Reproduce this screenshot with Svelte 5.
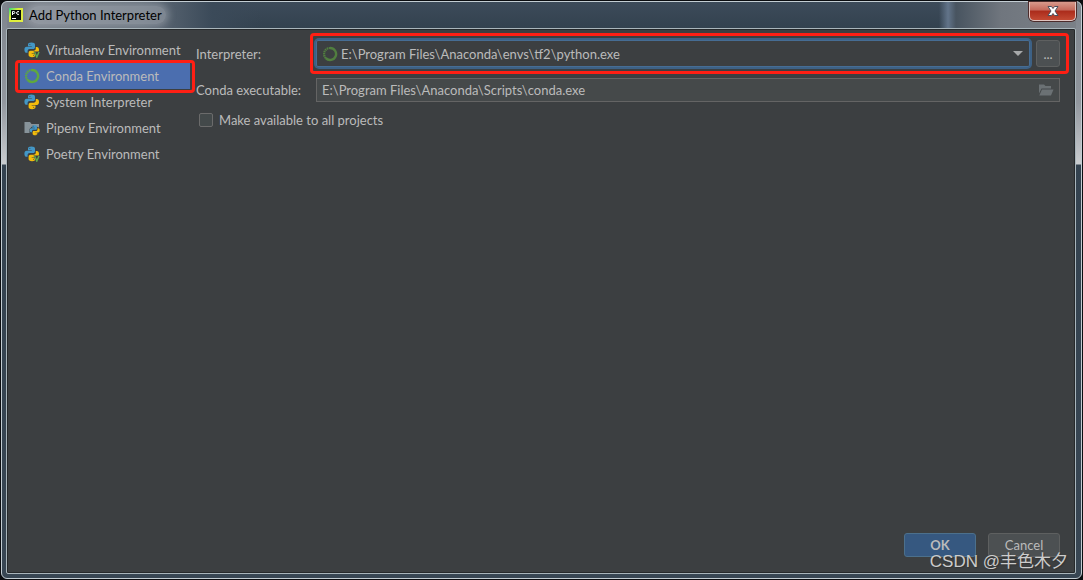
<script>
    const environments = [
        { id: 'virtualenv', name: 'Virtualenv Environment', icon: 'python', badge: true },
        { id: 'conda', name: 'Conda Environment', icon: 'conda' },
        { id: 'system', name: 'System Interpreter', icon: 'python' },
        { id: 'pipenv', name: 'Pipenv Environment', icon: 'pipenv' },
        { id: 'poetry', name: 'Poetry Environment', icon: 'python', badge: true },
    ];

    const interpreters = ['E:\\Program Files\\Anaconda\\envs\\tf2\\python.exe'];

    let selected = $state('conda');
    let interpreter = $state(interpreters[0]);
    let executable = $state('E:\\Program Files\\Anaconda\\Scripts\\conda.exe');
    let shared = $state(false);
</script>

{#snippet snakes()}
    <path fill="#4397c6" d="M7.4 .5C4.900 .5 4 1.400 4 2.700v1.500h3.800v.6H2.600C1.200 4.800 .4 6 .4 7.700c0 1.900.8 3.100 2.200 3.100h1V9.300c0-1.300.9-2.200 2.200-2.200h3.300c1.100 0 1.900-.8 1.900-1.900V2.700C11 1.300 9.800 .5 7.400 .5z" />
    <path fill="#f4bd0b" d="M8 15.200c2.600 0 3.500-.9 3.500-2.200v-1.500H7.700v-.6h5.100c1.500 0 2.200-1.200 2.200-2.900 0-1.900-.8-3.100-2.200-3.100h-1v1.700c0 1.300-.9 2.200-2.200 2.200H6.500c-1.100 0-1.900.8-1.900 1.900V13c0 1.400 1.200 2.200 3.400 2.200z" />
    <circle cx="5.900" cy="2.400" r=".5" fill="#3c3f41" />
    <circle cx="9.700" cy="13.300" r=".5" fill="#3c3f41" />
{/snippet}

{#snippet condaRing()}
    <svg class="icon" viewBox="0 0 16 16" fill="none" stroke="#5fa83f" aria-hidden="true">
        <path stroke-width="2.400" d="M8 2A6 6 0 1 1 3.800 12.200" />
        <path stroke-width="2.200" stroke-dasharray="1.500 .6" d="M3.800 12.200A6 6 0 0 1 8 2" />
    </svg>
{/snippet}

<main class="window">
    <header>
        <svg class="logo" viewBox="0 0 14 14" aria-hidden="true">
            <defs>
                <linearGradient id="logo-edge" x2="1" y2="1">
                    <stop offset="0" stop-color="#21d789" />
                    <stop offset=".35" stop-color="#d9ed35" />
                    <stop offset="1" stop-color="#e5f044" />
                </linearGradient>
            </defs>
            <path fill="url(#logo-edge)" d="M0 0h14v14H0z" />
            <path fill="#050805" d="M2 2h10v10H2z" />
            <path fill="none" stroke="#fff" d="M3.500 7V3.500h1.300a1 1 0 0 1 0 2H3.500M10 3.800A1.500 1.500 0 1 0 10 6.200M3 10.500h4" />
        </svg>
        <h1>Add Python Interpreter</h1>
        <button class="close" aria-label="Close">
            <svg viewBox="0 0 12 10" aria-hidden="true">
                <path fill="#fff" stroke="#4a4f5c" d="M1 .5h3.500L6 2.500 7.500 .5H11L8 5l3 4.500H7.500L6 7.500 4.500 9.500H1L4 5z" />
            </svg>
        </button>
    </header>

    <div class="client">
        <div class="body">
            <nav>
                {#each environments as env}
                    <button
                        class="env"
                        class:selected={selected === env.id}
                        onclick={() => (selected = env.id)}
                    >
                        {#if env.icon === 'conda'}
                            {@render condaRing()}
                        {:else if env.icon === 'pipenv'}
                            <svg class="icon" viewBox="0 0 16 16" aria-hidden="true">
                                <path fill="#87939a" d="M.5 2h5.500l1.500 2H15v3.500L9 5.500 5.500 9v4h-5z" />
                                <g transform="translate(5.500 5) scale(.68)">{@render snakes()}</g>
                            </svg>
                        {:else}
                            <svg class="icon" viewBox="0 0 16 16" aria-hidden="true">
                                {@render snakes()}
                                {#if env.badge}
                                    <path fill="#3c3f41" d="M9.500 9.500H16V16h-4z" />
                                    <path fill="none" stroke="#62a84a" stroke-width="1.500" d="M10.600 10l2.200 5 2.200-5" />
                                {/if}
                            </svg>
                        {/if}
                        {env.name}
                    </button>
                {/each}
            </nav>

            <form>
                <div class="row interpreter">
                    <label for="interpreter">Interpreter:</label>
                    <div class="marked">
                        <div class="combo">
                            {@render condaRing()}
                            <select id="interpreter" bind:value={interpreter}>
                                {#each interpreters as path}
                                    <option value={path}>{path}</option>
                                {/each}
                            </select>
                            <svg class="arrow" viewBox="0 0 10 5" aria-hidden="true">
                                <path fill="#a7a9aa" d="M0 0h10L5 5z" />
                            </svg>
                        </div>
                        <button type="button" class="more" aria-label="Browse interpreters">...</button>
                    </div>
                </div>
                <div class="row">
                    <label for="executable">Conda executable:</label>
                    <div class="path">
                        <input id="executable" type="text" bind:value={executable} />
                        <svg class="folder" viewBox="0 0 16 12" aria-hidden="true">
                            <path fill="#6b7174" d="M1 .5h5L7.500 2H13v2.500H3.500L1 9.500z" />
                            <path fill="#6b7174" d="M4 5.500h11.500L13 11.500H1.300z" />
                        </svg>
                    </div>
                </div>
                <label class="check">
                    <input type="checkbox" bind:checked={shared} />
                    Make available to all projects
                </label>
            </form>
        </div>

        <footer>
            <button class="action primary">OK</button>
            <button class="action">Cancel</button>
        </footer>
    </div>
    <span class="watermark">CSDN @丰色木夕</span>
</main>

<style>
    :global(body) {
        background: #0b0d10;
    }
    * {
        box-sizing: border-box;
    }
    .window {
        position: relative;
        display: flex;
        flex-direction: column;
        min-height: calc(100vh - 2px);
        margin: 1px;
        padding: 0 5px 4px 4px;
        border: 1px solid #c3cdd3;
        border-radius: 6px;
        background:
            linear-gradient(#7e858d, #92979e 100px, #c9cccf 162px, transparent 163px) left / 5px 100% no-repeat,
            linear-gradient(#7e858d, #92979e 100px, #c9cccf 162px, transparent 163px) right / 5px 100% no-repeat,
            linear-gradient(90deg, #7d838c, #626d79 140px, #3b4a59 210px, transparent 260px) top / 100% 28px no-repeat,
            linear-gradient(270deg, #7b8188, #70767e 80px, #485460 125px, #62748a 133px, transparent 142px) top / 100% 28px no-repeat,
            linear-gradient(#3d4b5a, #32414e 28px, #384653);
        color: #bbb;
        font: 13px/18px Lato, "Open Sans", sans-serif;
    }
    button,
    input,
    select {
        font: inherit;
        color: inherit;
    }

    header {
        display: flex;
        align-items: center;
        gap: 6px;
        height: 26px;
        padding-left: 3px;
    }
    .logo {
        width: 14px;
        height: 14px;
    }
    h1 {
        margin: 0;
        padding-right: 4px;
        border-radius: 10px;
        background: rgba(185, 190, 197, 0.4);
        box-shadow: 0 0 7px 3px rgba(185, 190, 197, 0.4);
        color: #000;
        font: inherit;
    }
    .close {
        display: grid;
        place-items: center;
        align-self: flex-start;
        width: 47px;
        height: 19px;
        margin-left: auto;
        padding: 0;
        border: 1px solid #e0c4c0;
        border-top: 0;
        border-radius: 0 0 5px 5px;
        background: linear-gradient(#d89a8c, #c4685a 45%, #ab2b1b 50%, #c34a33);
        box-shadow: 0 0 0 1px #4c2b2b;
    }
    .close svg {
        width: 12px;
        height: 10px;
    }

    .client {
        display: flex;
        flex: 1;
        flex-direction: column;
        justify-content: space-between;
        padding: 8px 15px 16px 13px;
        border: 1px solid #a9b5bb;
        border-radius: 2px;
        background: #3c3f41;
        box-shadow: inset 0 0 0 1px #26292b;
    }
    .body {
        display: flex;
        gap: 6px;
    }
    nav {
        flex: none;
        width: 170px;
    }
    .env {
        position: relative;
        display: flex;
        align-items: center;
        gap: 6px;
        width: 100%;
        height: 26px;
        padding: 0 4px;
        border: 0;
        background: none;
        white-space: nowrap;
    }
    .env.selected {
        background: #4b6eaf;
    }
    .env.selected::after {
        content: "";
        position: absolute;
        inset: -3px -5px -4px;
        border: 3px solid #ff1f14;
        border-radius: 4px;
    }
    .icon {
        flex: none;
        width: 16px;
        height: 16px;
    }

    form {
        flex: 1;
        min-width: 0;
    }
    .row {
        display: flex;
        align-items: center;
        margin-bottom: 8px;
    }
    .row label {
        flex: none;
        width: 120px;
    }
    .marked {
        position: relative;
        display: flex;
        flex: 1;
        gap: 6px;
        padding: 3px 0;
    }
    .marked::after {
        content: "";
        position: absolute;
        inset: -4px -9px -4px -6px;
        border: 3px solid #ff1f14;
        border-radius: 4px;
        pointer-events: none;
    }
    .combo {
        position: relative;
        display: flex;
        flex: 1;
        align-items: center;
        height: 27px;
        border-radius: 3px;
        box-shadow: 0 0 0 2px #3d6185;
    }
    .combo .icon {
        position: absolute;
        left: 6px;
        opacity: 0.6;
    }
    .combo select {
        width: 100%;
        height: 100%;
        padding: 0 24px;
        border: 1px solid #466d94;
        border-radius: 2px;
        outline: 0;
        background: none;
        appearance: none;
    }
    .arrow {
        position: absolute;
        right: 7px;
        width: 10px;
        height: 5px;
        pointer-events: none;
    }
    .more {
        width: 24px;
        padding: 0;
        border: 1px solid #5e6060;
        border-radius: 3px;
        background: #4c5052;
    }
    .path {
        display: flex;
        flex: 1;
        align-items: center;
        height: 24px;
        padding-right: 5px;
        border: 1px solid #646464;
        background: #45494a;
    }
    .path input {
        flex: 1;
        min-width: 0;
        height: 100%;
        padding: 0 5px;
        border: 0;
        outline: 0;
        background: none;
    }
    .folder {
        width: 16px;
        height: 12px;
    }
    .check {
        display: inline-flex;
        align-items: center;
        gap: 6px;
        padding: 1px 3px;
    }
    .check input {
        width: 14px;
        height: 14px;
        margin: 0;
        border: 1px solid #6b6b6b;
        border-radius: 2px;
        background: #43494a;
        appearance: none;
    }
    .check input:checked {
        background: #4b6eaf;
    }

    footer {
        display: flex;
        justify-content: flex-end;
        gap: 12px;
    }
    .action {
        width: 72px;
        height: 24px;
        padding: 0;
        border: 1px solid #5e6060;
        border-radius: 3px;
        background: #4c5052;
    }
    .primary {
        border-color: #4c708c;
        background: #365880;
        font-weight: 700;
    }
    .watermark {
        position: absolute;
        right: 13px;
        bottom: 4px;
        color: #ccc;
        font: 17px/24px "Liberation Sans", "Noto Sans CJK SC", sans-serif;
        text-shadow: 1px 1px 1px #333;
        pointer-events: none;
    }
</style>
